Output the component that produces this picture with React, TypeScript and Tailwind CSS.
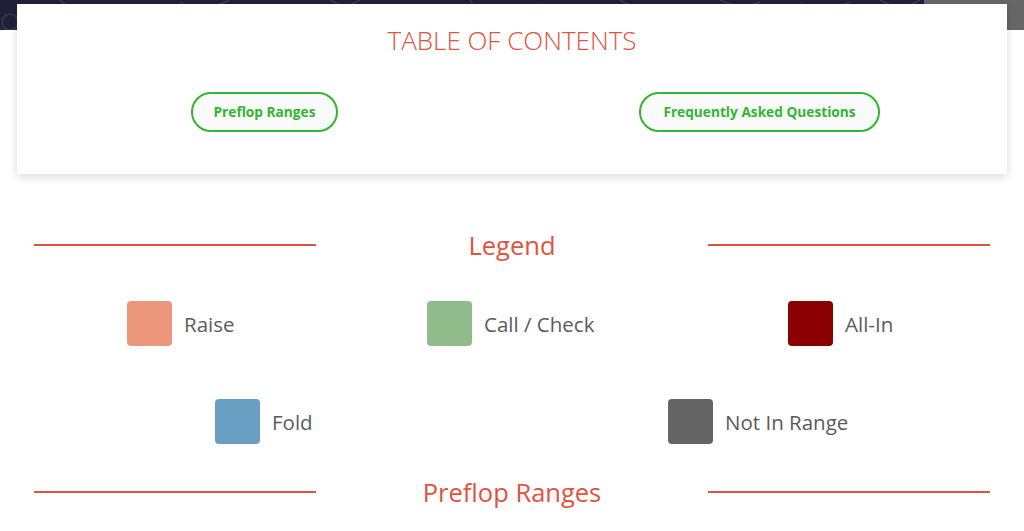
import React from "react";

function Heading({ text }: { text: string }) {
  return (
    <div className="grid grid-cols-[282px_1fr_282px] items-center px-[34px]">
      <div className="h-[2px] bg-[#e0533f]" />
      <div className="text-center text-[25.5px] leading-[32px] text-[#e0533f]">{text}</div>
      <div className="h-[2px] bg-[#e0533f]" />
    </div>
  );
}

function Item({ color, label }: { color: string; label: string }) {
  return (
    <div className="flex items-center gap-3">
      <div className="w-[45px] h-[45px] rounded-[4px]" style={{ backgroundColor: color }} />
      <span className="text-[20.5px] leading-[30px] text-[#5b5b5b]">{label}</span>
    </div>
  );
}

export default function App() {
  return (
    <div
      className="w-[1024px] h-[531px] overflow-hidden bg-white"
      style={{ fontFamily: "'Open Sans', sans-serif" }}
    >
      <div className="flex h-[30px]">
        <div className="flex-1 bg-[#20203a] overflow-hidden">
          <svg width="924" height="30" viewBox="0 0 924 30" fill="none" stroke="#3a3a5a" strokeWidth="1.5">
            <circle cx="10" cy="22" r="8" />
            <path d="M60 0 Q80 20 110 6" />
            <path d="M180 2 Q200 14 230 0" />
            <path d="M330 0 Q345 10 360 0" />
            <path d="M470 0 Q480 20 510 10 Q540 0 560 8" />
            <path d="M620 0 Q640 14 700 6" />
            <path d="M720 0 Q740 10 760 2" />
            <path d="M800 4 Q830 12 850 2" />
            <path d="M880 0 Q900 12 920 0" />
          </svg>
        </div>
        <div className="w-[100px] bg-[#666666]" />
      </div>

      <div className="relative mx-[17px] -mt-[26px] h-[170px] bg-white shadow-[0_3px_8px_rgba(0,0,0,0.15)]">
        <div className="pt-[20px] text-center text-[26px] leading-[32px] font-light text-[#e0533f]">
          TABLE OF CONTENTS
        </div>
        <div className="mt-[36px] grid grid-cols-2">
          <div className="flex justify-center">
            <button className="h-[40px] px-[21px] rounded-full border-2 border-[#33b533] bg-[#fafafa] text-[13.7px] font-bold text-[#33b533]">
              Preflop Ranges
            </button>
          </div>
          <div className="flex justify-center">
            <button className="h-[40px] px-[22px] rounded-full border-2 border-[#33b533] bg-[#fafafa] text-[13.7px] font-bold text-[#33b533]">
              Frequently Asked Questions
            </button>
          </div>
        </div>
      </div>

      <div className="mt-[55px]">
        <Heading text="Legend" />
      </div>

      <div className="mt-[40px] grid grid-cols-[300px_361px_auto] pl-[127px]">
        <Item color="#ec977b" label="Raise" />
        <Item color="#90bc8b" label="Call / Check" />
        <Item color="#8b0000" label="All-In" />
      </div>

      <div className="mt-[53px] grid grid-cols-[453px_auto] pl-[215px]">
        <Item color="#6a9fc4" label="Fold" />
        <Item color="#646464" label="Not In Range" />
      </div>

      <div className="mt-[32px]">
        <Heading text="Preflop Ranges" />
      </div>
    </div>
  );
}
